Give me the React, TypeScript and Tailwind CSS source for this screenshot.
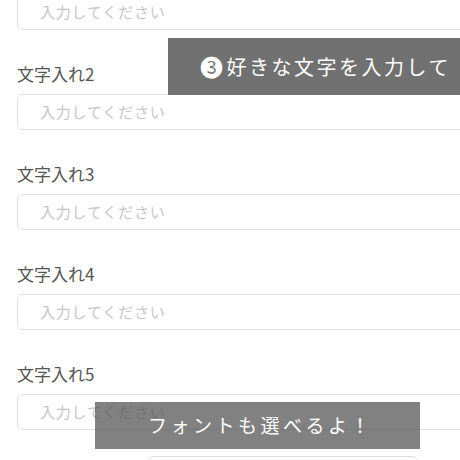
import React from 'react';

const fields = ['', '文字入れ2', '文字入れ3', '文字入れ4', '文字入れ5'];

export default function App() {
    return (
        <div
            className="relative w-[460px] h-[460px] overflow-hidden bg-white"
            style={{ fontFamily: '"Noto Sans CJK JP", "Noto Sans", sans-serif' }}
        >
            <div className="flex flex-col pl-[17px] -mt-[6px]">
                {fields.map((label, i) => (
                    <div key={i} className="flex flex-col">
                        {label && (
                            <div className="h-[24px] leading-[24px] text-[17px] text-[#555] mb-[8px]">{label}</div>
                        )}
                        <div className="w-[470px] h-[36px] rounded-[5px] border border-[#e2e2e2] flex items-center pl-[22px] text-[15px] tracking-[0.8px] text-[#c6c6c6] mb-[32px]">
                            入力してください
                        </div>
                    </div>
                ))}
                <div className="ml-[131px] -mt-[6px] w-[270px] h-[30px] rounded-[6px] border border-[#dcdcdc]" />
            </div>

            {/* overlay captions */}
            <div className="absolute left-[168px] top-[38px] w-[300px] h-[57px] bg-[#717171] flex items-center pl-[32px] text-white text-[20px] tracking-[2.5px]">
                <span className="text-[23px] leading-none mr-[1px]">❸</span>好きな文字を入力して
            </div>
            <div className="absolute left-[95px] top-[402px] w-[325px] h-[47px] bg-[rgba(80,80,80,0.72)] flex items-center justify-center pl-[6px] text-white text-[19px] tracking-[3.5px]">
                フォントも選べるよ！
            </div>
        </div>
    );
}
